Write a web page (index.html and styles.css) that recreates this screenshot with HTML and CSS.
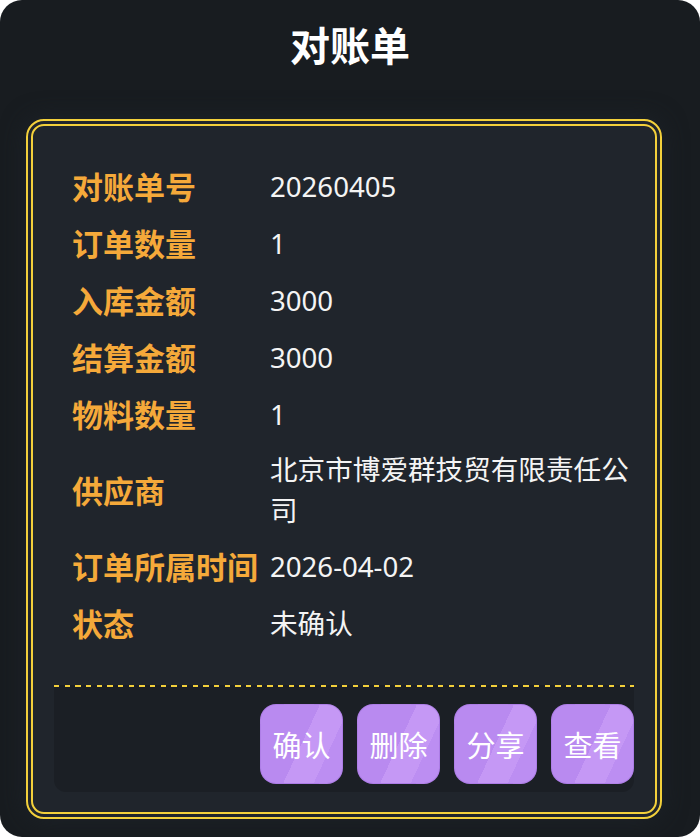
FILE: index.html
```html
<!DOCTYPE html>
<html lang="zh-CN">
<head>
<meta charset="utf-8">
<title>对账单</title>
<link rel="stylesheet" href="styles.css">
</head>
<body>
<div class="page">
  <header class="header">
    <h1 class="title">对账单</h1>
  </header>
  <section class="card">
    <div class="rows">
      <div class="row"><div class="label">对账单号</div><div class="value">20260405</div></div>
      <div class="row"><div class="label">订单数量</div><div class="value">1</div></div>
      <div class="row"><div class="label">入库金额</div><div class="value">3000</div></div>
      <div class="row"><div class="label">结算金额</div><div class="value">3000</div></div>
      <div class="row"><div class="label">物料数量</div><div class="value">1</div></div>
      <div class="row"><div class="label">供应商</div><div class="value">北京市博爱群技贸有限责任公司</div></div>
      <div class="row"><div class="label">订单所属时间</div><div class="value">2026-04-02</div></div>
      <div class="row"><div class="label">状态</div><div class="value">未确认</div></div>
    </div>
    <div class="footer">
      <button class="btn">确认</button>
      <button class="btn">删除</button>
      <button class="btn">分享</button>
      <button class="btn">查看</button>
    </div>
  </section>
</div>
</body>
</html>
```

FILE: styles.css
```css
html, body {
  margin: 0;
  padding: 0;
  background: #ffffff;
}

body {
  font-family: "Noto Sans CJK SC", "Noto Sans", sans-serif;
}

.page {
  width: 700px;
  height: 837px;
  box-sizing: border-box;
  background: #181c20;
  border-radius: 22px;
  overflow: hidden;
  padding-top: 16px;
}

.header {
  display: flex;
  justify-content: center;
}

.title {
  margin: 0;
  color: #ffffff;
  font-size: 40px;
  font-weight: 700;
  line-height: 56px;
}

.card {
  margin: 47px 0 0 26px;
  width: 636px;
  box-sizing: border-box;
  border: 7px double #f3d03b;
  border-radius: 18px;
  background: #20252c;
  padding: 38px 21px 20px;
  box-shadow: 0 0 24px rgba(30, 36, 42, 0.9);
}

.rows {
  display: flex;
  flex-direction: column;
  gap: 13px;
  padding-left: 18px;
}

.row {
  display: flex;
  align-items: center;
}

.label {
  flex: 0 0 198px;
  color: #f5a93a;
  font-size: 31px;
  font-weight: 700;
  line-height: 44px;
  white-space: nowrap;
}

.value {
  flex: 1;
  color: #f4f4f4;
  font-family: "Noto Sans", "Noto Sans CJK SC", sans-serif;
  font-size: 27.6px;
  line-height: 41px;
}

.footer {
  margin-top: 40px;
  padding: 19px 0 8px;
  background-color: #1b1f25;
  background-image: repeating-linear-gradient(90deg, #f3d03b 0 5.3px, transparent 5.3px 10.67px);
  background-size: 100% 2px;
  background-repeat: no-repeat;
  background-position: top left;
  border-radius: 0 0 12px 12px;
  display: flex;
  justify-content: flex-end;
  gap: 14px;
}

.btn {
  width: 83px;
  height: 80px;
  border: 1px solid rgba(160, 110, 220, 0.5);
  border-radius: 16px;
  padding: 0;
  color: #ffffff;
  font-family: "Noto Sans CJK SC", "Noto Sans", sans-serif;
  font-size: 29px;
  font-weight: 400;
  line-height: 1;
  background: linear-gradient(115deg, #b98af0 0 50%, #c598f5 50% 76%, #bc8ef2 76% 100%);
}
```
